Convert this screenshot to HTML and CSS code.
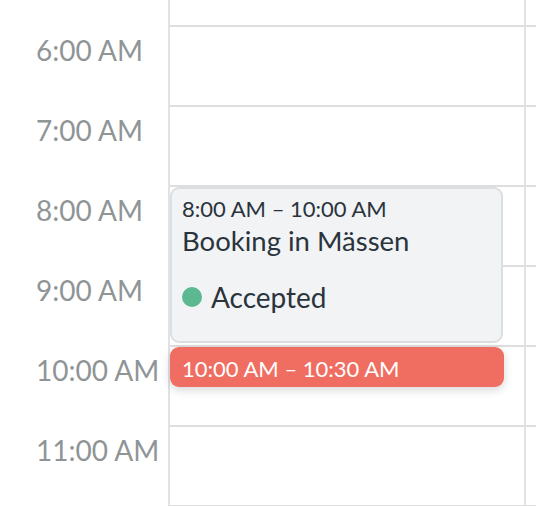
FILE: index.html
```html
<!DOCTYPE html>
<html>
<head>
<meta charset="utf-8">
<link rel="stylesheet" href="styles.css">
</head>
<body>
<div class="calendar">
  <div class="times">
    <div class="label"></div>
    <div class="label">6:00 AM</div>
    <div class="label">7:00 AM</div>
    <div class="label">8:00 AM</div>
    <div class="label">9:00 AM</div>
    <div class="label">10:00 AM</div>
    <div class="label">11:00 AM</div>
    <div class="label"></div>
  </div>
  <div class="day">
    <div class="slot"></div>
    <div class="slot"></div>
    <div class="slot"></div>
    <div class="slot"></div>
    <div class="slot"></div>
    <div class="slot"></div>
    <div class="slot"></div>
    <div class="slot"></div>
    <div class="event booking">
      <div class="event-time">8:00 AM – 10:00 AM</div>
      <div class="event-title">Booking in Mässen</div>
      <div class="event-status"><span class="dot"></span>Accepted</div>
    </div>
    <div class="event blocked">
      <div class="blocked-time">10:00 AM – 10:30 AM</div>
    </div>
  </div>
  <div class="rest">
    <div class="slot"></div>
    <div class="slot"></div>
    <div class="slot"></div>
    <div class="slot"></div>
    <div class="slot"></div>
    <div class="slot"></div>
    <div class="slot"></div>
    <div class="slot"></div>
  </div>
</div>
</body>
</html>
```

FILE: styles.css
```css
html, body {
  margin: 0;
  padding: 0;
  background: #ffffff;
  overflow: hidden;
}
body {
  width: 536px;
  height: 506px;
  font-family: Lato, "Noto Sans", sans-serif;
}
.calendar {
  display: flex;
  margin-top: -55px;
  height: 561px;
  overflow: hidden;
}
.times {
  width: 168px;
  flex: none;
  display: flex;
  flex-direction: column;
}
.label {
  height: 80px;
  flex: none;
  box-sizing: border-box;
  padding-top: 8px;
  padding-left: 36px;
  font-size: 28px;
  line-height: 34px;
  color: #8f9596;
}
.day {
  width: 354px;
  flex: none;
  border-left: 2px solid #dfe3e6;
  border-right: 2px solid #dfe3e6;
  position: relative;
  display: flex;
  flex-direction: column;
}
.rest {
  flex: 1;
  display: flex;
  flex-direction: column;
}
.slot {
  height: 80px;
  flex: none;
  box-sizing: border-box;
  border-top: 2px solid #dedede;
}
.event {
  position: absolute;
  left: 0;
  box-sizing: border-box;
}
.booking {
  top: 242px;
  width: 333px;
  height: 156px;
  background: #f1f3f5;
  border: 2px solid #dcdfe2;
  border-radius: 9px;
  padding: 7px 10px;
  color: #2b333d;
}
.event-time {
  font-size: 22px;
  line-height: 26px;
}
.event-title {
  font-size: 27.5px;
  line-height: 32px;
  margin-top: 3px;
}
.event-status {
  display: flex;
  align-items: center;
  gap: 9px;
  font-size: 28px;
  line-height: 32px;
  margin-top: 24px;
}
.dot {
  width: 20px;
  height: 20px;
  border-radius: 50%;
  background: #5bb891;
  flex: none;
}
.blocked {
  top: 402px;
  width: 334px;
  height: 40px;
  background: #ef6e61;
  border-radius: 9px;
  box-shadow: 0 3px 10px rgba(0, 0, 0, 0.16);
  padding: 9px 12px 0;
  color: #ffffff;
}
.blocked-time {
  font-size: 22px;
  line-height: 26px;
}
```
